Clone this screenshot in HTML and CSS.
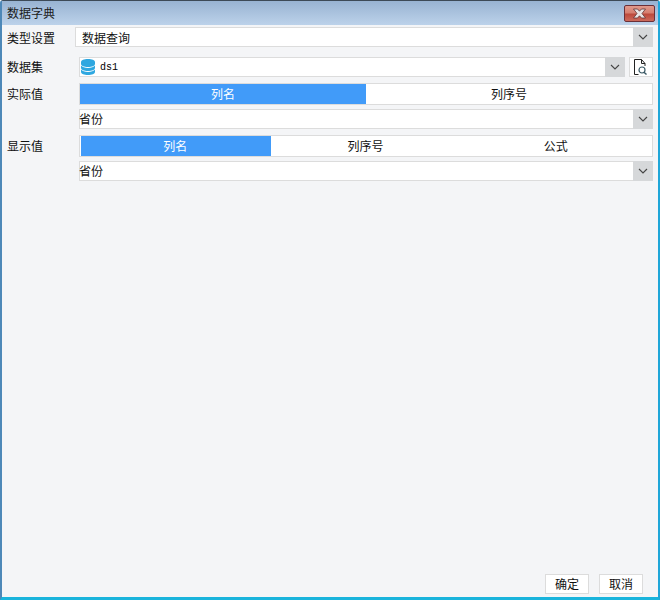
FILE: index.html
```html
<!DOCTYPE html>
<html lang="zh">
<head>
<meta charset="utf-8">
<title>数据字典</title>
<link rel="stylesheet" href="styles.css">
</head>
<body>
<div class="window">
  <div class="titlebar">
    <span class="title">数据字典</span>
    <div class="close"><svg width="13" height="11" viewBox="0 0 13 11"><path d="M.5 1h4L6.500 3.200 8.500 1h4L9 5.500l3.500 4.500h-4L6.500 7.800 4.500 10h-4L4 5.500z" fill="#e9e6e6" stroke="#5f3434" stroke-width=".8"/></svg></div>
  </div>
  <div class="content">
    <div class="row row-type">
      <span class="label label-type">类型设置</span>
      <div class="select"><span class="value value-pad">数据查询</span><span class="arrow"><svg class="chev" viewBox="0 0 10 6"><path d="M1 1l4 4 4-4"/></svg></span></div>
    </div>
    <div class="row row-ds">
      <span class="label">数据集</span>
      <div class="select tall">
        <svg class="db" width="14" height="16" viewBox="0 0 14 16"><path d="M0 3C0 1.300 3.100 0 7 0s7 1.300 7 3v2c0 1.700-3.100 3-7 3S0 6.700 0 5z" fill="#2ea7e0"/><path d="M0 6.500C1.200 8 3.800 8.900 7 8.900s5.800-.9 7-2.400V9c0 1.700-3.100 3-7 3S0 10.700 0 9z" fill="#2ea7e0"/><path d="M0 10.500c1.200 1.500 3.800 2.400 7 2.400s5.800-.9 7-2.400V13c0 1.700-3.100 3-7 3s-7-1.300-7-3z" fill="#2ea7e0"/></svg>
        <span class="ds-name">ds1</span>
        <span class="arrow"><svg class="chev" viewBox="0 0 10 6"><path d="M1 1l4 4 4-4"/></svg></span>
      </div>
      <div class="preview"><svg width="14" height="16" viewBox="0 0 14 16" fill="none" stroke="#222" stroke-width="1"><path d="M4.500 15.500H.5V.5h7l3.500 4v2.500M7.500.5v4h3.500"/><circle cx="8" cy="11" r="3" stroke="#3b5a66" stroke-width="1.200"/><path d="M10 13.200l2.500 2.300" stroke="#3b5a66" stroke-width="1.400"/></svg></div>
    </div>
    <div class="row row-seg1">
      <span class="label">实际值</span>
      <div class="seg seg-flush"><span class="seg-item active">列名</span><span class="seg-item">列序号</span></div>
    </div>
    <div class="row row-sel">
      <span class="label"></span>
      <div class="select"><span class="value value-flush">省份</span><span class="arrow"><svg class="chev" viewBox="0 0 10 6"><path d="M1 1l4 4 4-4"/></svg></span></div>
    </div>
    <div class="row row-seg2">
      <span class="label">显示值</span>
      <div class="seg seg-inset"><span class="seg-item active">列名</span><span class="seg-item">列序号</span><span class="seg-item">公式</span></div>
    </div>
    <div class="row row-sel">
      <span class="label"></span>
      <div class="select"><span class="value value-flush">省份</span><span class="arrow"><svg class="chev" viewBox="0 0 10 6"><path d="M1 1l4 4 4-4"/></svg></span></div>
    </div>
  </div>
  <div class="footer">
    <div class="btn">确定</div>
    <div class="btn">取消</div>
  </div>
</div>
</body>
</html>
```
FILE: styles.css
```css
* { box-sizing: border-box; }
html, body { margin: 0; padding: 0; }
body {
  width: 660px;
  height: 600px;
  overflow: hidden;
  font-family: "Noto Sans CJK SC", "Liberation Sans", sans-serif;
  font-size: 12px;
  line-height: 1;
  color: #111;
}
.window {
  width: 660px;
  height: 600px;
  display: flex;
  flex-direction: column;
  background: #f4f5f7;
  border-style: solid;
  border-color: #3d4a57 #1fa6d8 #19b4dc #4d88b8;
  border-width: 1px 2px 3px 2px;
  border-radius: 3px 3px 0 0;
}
.titlebar {
  height: 24px;
  flex: none;
  display: flex;
  align-items: center;
  justify-content: space-between;
  padding: 0 3px 0 5px;
  background: linear-gradient(#98b3d2, #bcd2ea);
}
.title { color: #1a1a1a; }
.close {
  width: 31px;
  height: 17px;
  margin-top: 1px;
  display: flex;
  align-items: center;
  justify-content: center;
  border: 1px solid #6b3038;
  border-radius: 2px;
  background: linear-gradient(#e09a8c 0%, #d67f70 45%, #bd4a3c 55%, #cc6a5c 100%);
}
.content {
  flex: 1;
  display: flex;
  flex-direction: column;
  padding: 2px 5px 0 5px;
}
.row { display: flex; align-items: stretch; }
.label {
  width: 72px;
  flex: none;
  display: flex;
  align-items: center;
}
.select {
  flex: 1;
  min-width: 0;
  height: 20px;
  display: flex;
  align-items: center;
  background: #fff;
  border: 1px solid #dcdcdc;
  border-right: 0;
}
.value { flex: 1; }
.value-pad { padding: 1px 0 0 6px; }
.value-flush { margin-left: -1px; }
.arrow {
  width: 20px;
  height: 20px;
  margin: -1px 0 -1px auto;
  flex: none;
  display: flex;
  align-items: center;
  justify-content: center;
  background: #d6d8da;
}
.chev { width: 10px; height: 6px; fill: none; stroke: #444; stroke-width: 1.1; }
.row-type { height: 20px; }
.label-type { width: 68px; padding-top: 1px; }
.row-ds { margin-top: 10px; height: 20px; gap: 4px; }
.row-ds .label { margin-right: -4px; }
.db { margin-left: 1px; flex: none; }
.ds-name { margin: 2px 0 0 5px; font-family: "Liberation Mono", monospace; font-size: 10px; color: #000; }
.preview {
  width: 24px;
  flex: none;
  display: flex;
  align-items: center;
  justify-content: center;
  background: #fff;
  border: 1px solid #dcdcdc;
}
.row-seg1 { margin-top: 6px; height: 22px; }
.row-seg2 { margin-top: 6px; height: 22px; }
.row-sel { margin-top: 4px; height: 20px; }
.seg {
  flex: 1;
  min-width: 0;
  display: flex;
  background: #fff;
  border: 1px solid #dcdcdc;
}
.seg-item {
  flex: 1;
  display: flex;
  align-items: center;
  justify-content: center;
}
.seg-item.active { background: #419bf9; color: #fff; }
.seg-inset { padding-left: 1px; }
.seg-inset .seg-item { padding-right: 2px; }
.footer {
  flex: none;
  display: flex;
  justify-content: flex-end;
  gap: 10px;
  padding: 0 15px 3px 0;
}
.btn {
  width: 44px;
  height: 20px;
  display: flex;
  align-items: center;
  justify-content: center;
  background: #fff;
  border: 1px solid #dcdcdc;
}
```
